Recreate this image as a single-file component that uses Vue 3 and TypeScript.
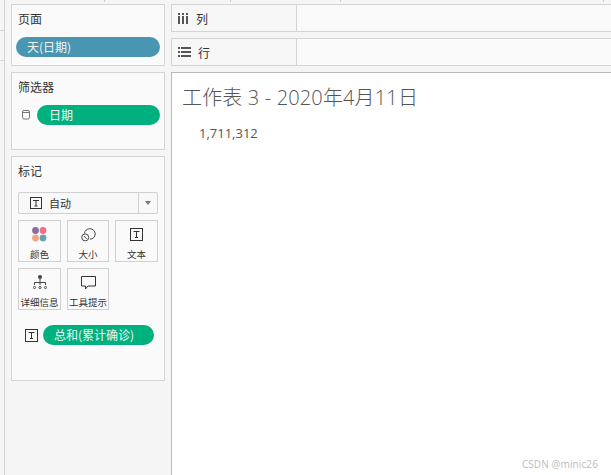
<script setup lang="ts">
const marks = [
  { key: 'color', label: '颜色' },
  { key: 'size', label: '大小' },
  { key: 'text', label: '文本' },
  { key: 'detail', label: '详细信息' },
  { key: 'tip', label: '工具提示' },
]
const dots = [
  { cx: 3.5, cy: 3.5, fill: '#8a6d9f' },
  { cx: 11, cy: 3.5, fill: '#f0708a' },
  { cx: 3.5, cy: 11, fill: '#f0a884' },
  { cx: 11, cy: 11, fill: '#6c9fae' },
]
</script>

<template>
  <div class="app">
    <div class="strip">
      <div class="strip-cell"></div>
      <div class="strip-cell second"></div>
    </div>
    <aside class="side">
      <section class="card pages">
        <h3>页面</h3>
        <div class="pill blue">天(日期)</div>
      </section>
      <section class="card filters">
        <h3>筛选器</h3>
        <div class="filter-row">
          <svg class="db" width="9" height="10" viewBox="0 0 9 10" fill="none" stroke="#777" stroke-width="1">
            <rect x="0.5" y="0.5" width="7" height="8.5" rx="1.5" />
            <path d="M0.5 2.5h7" />
          </svg>
          <div class="pill green">日期</div>
        </div>
      </section>
      <section class="card marks">
        <h3>标记</h3>
        <div class="select">
          <span class="select-main">
            <svg class="t-icon" width="12" height="12" viewBox="0 0 12 12" fill="none" stroke="#333">
              <rect x="0.5" y="0.5" width="11" height="11" />
              <path d="M3 3.5h6M6 3.5v5.5M4.5 9h3" />
            </svg>
            <span>自动</span>
          </span>
          <span class="select-arrow"><i></i></span>
        </div>
        <div class="mark-grid">
          <div v-for="m in marks" :key="m.key" class="mark">
            <span class="mark-icon">
              <svg v-if="m.key === 'color'" width="15" height="15" viewBox="0 0 15 15">
                <circle v-for="d in dots" :key="d.fill" :cx="d.cx" :cy="d.cy" r="3.4" :fill="d.fill" />
              </svg>
              <svg v-else-if="m.key === 'size'" width="15" height="14" viewBox="0 0 15 14" fill="none" stroke="#444">
                <path d="M3.4 5.4C3.8 2.6 6 .7 8.8.7c3 0 5.4 2.4 5.4 5.3 0 2.9-2.4 5.2-5.4 5.2" />
                <circle cx="4.2" cy="9.4" r="3.5" />
                <path d="M2.8 8l2.8 2.8" />
              </svg>
              <svg v-else-if="m.key === 'text'" width="13" height="13" viewBox="0 0 13 13" fill="none" stroke="#333">
                <rect x="0.5" y="0.5" width="12" height="12" />
                <path d="M3.5 3.5h6M6.5 3.5v6M5 9.5h3" />
              </svg>
              <svg v-else-if="m.key === 'detail'" width="14" height="15" viewBox="0 0 14 15" fill="none" stroke="#444">
                <circle cx="7" cy="2" r="2" fill="#444" stroke="none" />
                <path d="M7 4v6M1.5 10V7.5h11V10" />
                <circle cx="1.5" cy="12.5" r="1.1" />
                <circle cx="7" cy="12.5" r="1.1" />
                <circle cx="12.5" cy="12.5" r="1.1" />
              </svg>
              <svg v-else width="15" height="14" viewBox="0 0 15 14" fill="none" stroke="#333">
                <path d="M0.5 0.5h14v9.5H7L4.5 13v-3H0.5z" />
              </svg>
            </span>
            <span class="mark-label">{{ m.label }}</span>
          </div>
        </div>
        <div class="field-row">
          <svg width="13" height="13" viewBox="0 0 13 13" fill="none" stroke="#333">
            <rect x="0.5" y="0.5" width="12" height="12" />
            <path d="M3.5 3.5h6M6.5 3.5v6M5 9.5h3" />
          </svg>
          <div class="pill green">总和(累计确诊)</div>
        </div>
      </section>
    </aside>
    <main class="main">
      <div class="shelf">
        <div class="shelf-label">
          <svg width="11" height="11" viewBox="0 0 11 11" fill="#555">
            <rect x="0" y="0" width="2" height="2" /><rect x="4" y="0" width="2" height="2" /><rect x="8" y="0" width="2" height="2" />
            <rect x="0" y="3" width="2" height="8" /><rect x="4" y="3" width="2" height="8" /><rect x="8" y="3" width="2" height="8" />
          </svg>
          <span>列</span>
        </div>
      </div>
      <div class="shelf">
        <div class="shelf-label">
          <svg width="13" height="10" viewBox="0 0 13 10" fill="#555">
            <rect x="0" y="0" width="2" height="2" /><rect x="3" y="0" width="10" height="2" />
            <rect x="0" y="4" width="2" height="2" /><rect x="3" y="4" width="10" height="2" />
            <rect x="0" y="8" width="2" height="2" /><rect x="3" y="8" width="10" height="2" />
          </svg>
          <span>行</span>
        </div>
      </div>
      <div class="viz">
        <h1>工作表 3 - 2020年4月11日</h1>
        <div class="value">1,711,312</div>
        <div class="mark-water">CSDN @minic26</div>
      </div>
    </main>
    <i class="tick t1"></i><i class="tick t2"></i><i class="tick t3"></i><i class="tick t4"></i>
  </div>
</template>

<style scoped>
.app {
  position: relative;
  display: flex;
  width: 611px;
  height: 475px;
  overflow: hidden;
  background: #f5f5f5;
  font-family: "Noto Sans CJK SC", "Open Sans", sans-serif;
  color: #333;
  box-sizing: border-box;
}
.strip {
  width: 5px;
  flex: none;
  box-sizing: border-box;
  border-right: 1px solid #d4d4d4;
}
.strip-cell {
  height: 30px;
  border-bottom: 1px solid #d8d8d8;
}
.strip-cell.second { height: 29px; }
.side {
  width: 166px;
  flex: none;
  box-sizing: border-box;
  padding: 4px 0 0 6px;
  display: flex;
  flex-direction: column;
  gap: 6px;
}
.card {
  box-sizing: border-box;
  width: 154px;
  background: #fafafa;
  border: 1px solid #d4d4d4;
  padding: 0 4px 0 6px;
}
.card h3 {
  margin: 0;
  font-size: 12px;
  line-height: 16px;
  font-weight: 400;
  color: #333;
  padding-top: 6px;
}
.pages { height: 62px; }
.filters { height: 78px; }
.marks { height: 225px; }
.pill {
  box-sizing: border-box;
  height: 20px;
  border-radius: 10px;
  color: #f4f4f4;
  font-size: 12px;
  line-height: 20px;
  white-space: nowrap;
}
.blue {
  background: #4996b2;
  margin: 10px 0 0 -2px;
  padding-left: 11px;
}
.green { background: #00b180; flex: 1; padding-left: 12px; }
.filter-row {
  display: flex;
  align-items: center;
  margin-top: 10px;
}
.db { margin: 0 6px 0 4px; flex: none; }
.select {
  margin-top: 13px;
  height: 22px;
  box-sizing: border-box;
  width: 140px;
  border: 1px solid #d0d0d0;
  border-radius: 2px;
  display: flex;
  font-size: 11px;
  background: #f8f8f8;
}
.select-main {
  flex: 1;
  display: flex;
  align-items: center;
  padding-left: 11px;
  gap: 7px;
  border-right: 1px solid #d0d0d0;
}
.select-arrow {
  width: 18px;
  display: flex;
  align-items: center;
  justify-content: center;
}
.select-arrow i {
  border-left: 3.5px solid transparent;
  border-right: 3.5px solid transparent;
  border-top: 4px solid #777;
}
.mark-grid {
  display: grid;
  grid-template-columns: 43px 42px 43px;
  column-gap: 6px;
  row-gap: 6px;
  margin-top: 6px;
}
.mark {
  box-sizing: border-box;
  height: 42px;
  background: #fafafa;
  border: 1px solid #d0d0d0;
  display: flex;
  flex-direction: column;
  align-items: center;
}
.mark-icon {
  height: 27px;
  display: flex;
  align-items: center;
  justify-content: center;
  flex: none;
}
.mark-label {
  font-size: 9.5px;
  line-height: 13px;
  white-space: nowrap;
  color: #333;
}
.field-row {
  display: flex;
  align-items: center;
  gap: 5px;
  margin: 15px 6px 0 7px;
}
.field-row .green { padding-left: 11px; }
.main {
  flex: 1;
  min-width: 0;
  padding-top: 4px;
  display: flex;
  flex-direction: column;
  gap: 6px;
}
.shelf {
  height: 28px;
  flex: none;
  box-sizing: border-box;
  background: #fafafa;
  border: 1px solid #d4d4d4;
  border-right: 0;
}
.shelf-label {
  box-sizing: border-box;
  width: 125px;
  height: 26px;
  border-right: 1px solid #d4d4d4;
  background: #f7f7f7;
  display: flex;
  align-items: center;
  gap: 7px;
  padding-left: 6px;
  font-size: 12px;
}
.viz {
  position: relative;
  flex: 1;
  background: #fff;
  border-top: 1px solid #b8b8b8;
  border-left: 1px solid #b8b8b8;
}
.viz h1 {
  margin: 0;
  padding: 13px 0 0 10px;
  font-family: "Open Sans", "Noto Sans CJK SC", sans-serif;
  font-size: 20px;
  line-height: 24px;
  font-weight: 300;
  letter-spacing: 0.15px;
  color: #555;
  white-space: nowrap;
}
.value {
  margin: 15px 0 0 27px;
  font-family: "Open Sans", sans-serif;
  font-size: 13px;
  line-height: 16px;
  color: #555;
}
.mark-water {
  position: absolute;
  right: 13px;
  bottom: 4px;
  font-family: "Open Sans", sans-serif;
  font-size: 10px;
  line-height: 14px;
  letter-spacing: 0.1px;
  color: #bcbcbc;
}
.tick {
  position: absolute;
  top: 0;
  width: 1px;
  height: 2px;
  background: #cfcfcf;
}
.t1 { left: 104px; }
.t2 { left: 230px; }
.t3 { left: 340px; }
.t4 { left: 603px; }
</style>
